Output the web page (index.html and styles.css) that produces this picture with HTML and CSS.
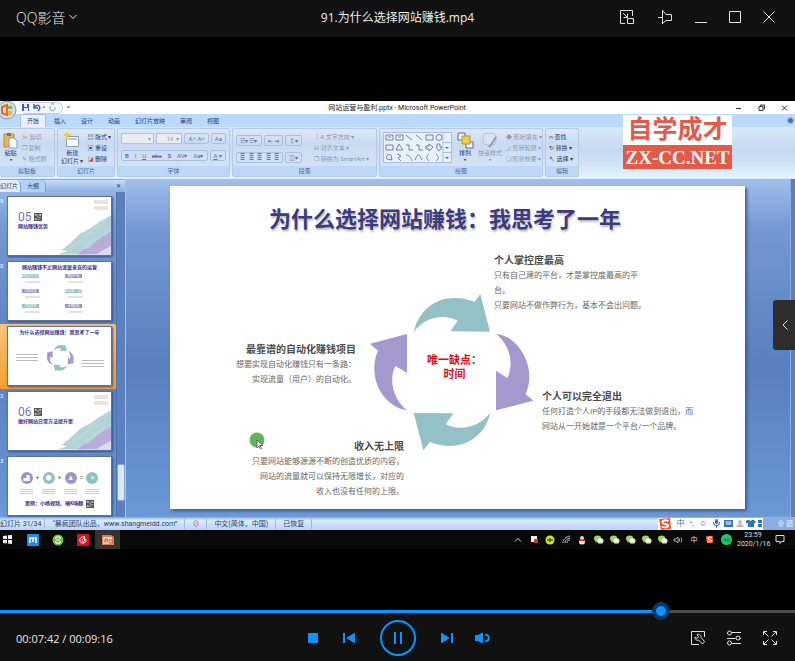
FILE: index.html
```html
<!DOCTYPE html>
<html lang="zh-CN">
<head>
<meta charset="utf-8">
<title>QQ影音</title>
<link rel="stylesheet" href="styles.css">
</head>
<body>
<svg class="sprite" aria-hidden="true">
  <symbol id="wechat" viewBox="0 0 12 12"><ellipse cx="5" cy="5" rx="4" ry="3.400" fill="#8fd94f"/><ellipse cx="8" cy="7.500" rx="3.500" ry="2.800" fill="#f1f5ee"/><path d="M3 7.500L2.500 9.500L5 8zM9 9.500l1.500 1L10 9z" fill="#8fd94f"/></symbol>
  <symbol id="sogou" viewBox="0 0 14 14"><path d="M1 2L12 1l1 11L3 13z" fill="#e9572b"/><path d="M10.500 4C8 2.500 4 3.500 4.500 5.500c.5 2 5.500 1 5.500 3.200 0 2-4 2.300-6 .8" fill="none" stroke="#fff" stroke-width="1.800"/></symbol>
  <symbol id="qr" viewBox="0 0 9 9"><path d="M0 0h9v9H0z" fill="#555"/><path d="M1 1h2v2H1zM6 1h2v2H6zM1 6h2v2H1zM4 2h1v3H4zM5 5h3v1H5zM4 7h2v1H4z" fill="#c9c9c9"/></symbol>
  <symbol id="brush" viewBox="0 0 62 54"><path d="M62 9L48 17 38 24 27 30 14 42 5 49 12 50 1 54H34L50 47 62 40z" fill="#b4d3d6"/><path d="M62 28L46 38 37 46 29 49 24 54H62V48z" fill="#b8add9"/><path d="M62 44L44 54H62z" fill="#dcd8ee"/><path d="M57 14L34 31M42 28L12 48M62 24L32 45" stroke="#d9e6ec" stroke-width="1" opacity=".5"/></symbol>
  <symbol id="cycle" viewBox="0 0 660 540">
    <path fill="#94c1c5" d="M222 155C235 90 290 50 350 54 375 56 390 60 403 66L421 42 450 155 331 154 353 122C310 100 255 110 222 155zM450 399C440 455 390 500 325 498 300 497 285 492 270 486L250 511 221 399 340 400 317 433C360 455 420 440 450 399z"/>
    <path fill="#a399cf" d="M468 162C520 165 568 225 568 290 568 310 563 328 557 342L580 362 468 391V272L502 294C525 245 505 190 468 162zM201 390C150 385 102 330 103 265 103 245 107 225 114 212L90 191 201 162V279L166 258C145 300 160 360 201 390z"/>
  </symbol>
</svg>

<div class="player">
  <header class="titlebar">
    <button class="brand" type="button">QQ影音
      <svg width="8" height="6" viewBox="0 0 8 6"><path d="M.5 1L4 4.500 7.500 1" fill="none" stroke="currentColor"/></svg>
    </button>
    <h1 class="filename">91.为什么选择网站赚钱.mp4</h1>
    <div class="window-tools">
      <div class="tools-a">
        <button type="button" aria-label="迷你模式"><svg width="16" height="16" viewBox="0 0 16 16"><path d="M6 14.500H1.500v-13h12V7M8.500 9.500h6v5h-6zM4 4l4 4M8.500 4.500v4h-4"/></svg></button>
        <button type="button" aria-label="置顶"><svg width="16" height="16" viewBox="0 0 16 16"><path d="M1 8.500h4M5.500 1v14M5.500 1.500L9 5.500h5.500v6H9L5.500 14.500"/></svg></button>
      </div>
      <div class="tools-b">
        <button type="button" aria-label="最小化"><svg width="14" height="14" viewBox="0 0 14 14"><path d="M1 12.500h12"/></svg></button>
        <button type="button" aria-label="最大化"><svg width="14" height="14" viewBox="0 0 14 14"><path d="M1.500 1.500h11v11h-11z"/></svg></button>
        <button type="button" aria-label="关闭"><svg width="14" height="14" viewBox="0 0 14 14"><path d="M1.500 1.500l11 11M12.500 1.500l-11 11"/></svg></button>
      </div>
    </div>
  </header>

  <main class="stage">
    <div class="video">
      <div class="ppt-title">
        <svg class="orb" width="18" height="20" viewBox="0 0 18 20"><circle cx="7" cy="9" r="9" fill="#d5dbe6" stroke="#8795ad"/><path d="M2 6l5-2v10l-5-2z" fill="none" stroke="#e56a2c" stroke-width="2"/><path d="M8 5h4v3H8z" fill="#7fb84a"/><path d="M8 10h4v4H8z" fill="#efb72f"/></svg>
        <svg class="quick" width="52" height="12" viewBox="0 0 52 12"><path d="M0 .5h39c6 1 6 10 0 11H4" fill="#f4f7fc" stroke="#c3cddd"/><path d="M3 2h7v7H3z" fill="#4a55b0"/><path d="M5 2h3v3H5zM5 6h4v3H5z" fill="#e6eaff"/><path d="M16 5c3-4 7 0 3 4M15 2v4h4" fill="none" stroke="#3a62bd" stroke-width="1.500"/><path d="M24 5h2M48 5h3" stroke="#445" stroke-width="1"/><path d="M31 4c-1 6 6 6 5 1M35 2h-3" fill="none" stroke="#9fb0c9" stroke-width="1.300"/></svg>
        <span class="doc-name">网站运营与盈利.pptx - Microsoft PowerPoint</span>
        <svg class="ppt-win" width="56" height="8" viewBox="0 0 56 8"><path d="M1 4.500h5M24 2.500h4v4h-4zM25.500 2v-1h4v4h-1M47 1.500l5 5M52 1.500l-5 5" fill="none" stroke="#333"/></svg>
      </div>
      <div class="ppt-tabs"><span class="active">开始</span><span>插入</span><span>设计</span><span>动画</span><span>幻灯片放映</span><span>审阅</span><span>视图</span><i class="help"></i></div>
      <div class="ribbon">
        <section class="group g-clip"><div class="tools">
          <div class="big"><svg width="15" height="17" viewBox="0 0 15 17"><path d="M1 2h10v13H1z" fill="#e8b455" stroke="#bd8a3a"/><path d="M4 1h4v3H4z" fill="#6b7485"/><path d="M6 6h5l3 3v7H6z" fill="#fff" stroke="#8a9bb8"/></svg><span>粘贴</span><b>▾</b></div>
          <div class="stack off"><span>✂ 剪切</span><span>❐ 复制</span><span>✎ 格式刷</span></div></div><h2>剪贴板</h2></section>
        <section class="group g-slides"><div class="tools">
          <div class="big"><svg width="16" height="17" viewBox="0 0 16 17"><path d="M2.500 4.500h12v10h-12z" fill="#fff" stroke="#8b9dbc"/><path d="M4 7h9" stroke="#b7c7e3" stroke-width="2"/><path d="M3 0v7M0 3h7" stroke="#f0cf3f" stroke-width="2"/></svg><span>新建<br>幻灯片 ▾</span></div>
          <div class="stack"><span>▤ 版式 ▾</span><span>▣ 重设</span><span><em>◪</em> 删除</span></div></div><h2>幻灯片</h2></section>
        <section class="group g-font"><div class="tools rows">
          <div class="row"><i class="field wide">▾</i><i class="field">14 &nbsp;▾</i><i class="pill">A˄ A˅</i><i class="pill">Aa</i></div>
          <div class="row"><i class="pill grow"><b>B</b><em>I</em><u>U</u><s>abc</s><b>S</b><span>AV▾</span><span>Aa▾</span></i><i class="pill"><u>A</u> ▾</i></div>
          </div><h2>字体</h2></section>
        <section class="group g-para"><div class="tools">
          <div class="rows">
            <div class="row"><i class="pill">☰▾ ☰▾</i><i class="pill">⇤ ⇥</i><i class="pill">↕▾</i></div>
            <div class="row"><i class="pill grow"><span>≣</span><span>≣</span><span>≣</span><span>≣</span><span>≣</span></i><i class="pill">▥▾</i></div>
          </div>
          <div class="stack off"><span>‖A 文字方向 ▾</span><span>⊟ 对齐文本 ▾</span><span>❐ 转换为 SmartArt ▾</span></div></div><h2>段落</h2></section>
        <section class="group g-draw"><div class="tools">
          <svg class="shapes" width="69" height="31" viewBox="0 0 69 31"><path d="M.5.5h68v30H.5z" fill="#e8f0fc" stroke="#a9bfdf"/><path d="M60 .5v30M60 10.500h8M60 20.500h8" stroke="#a9bfdf"/><g fill="none" stroke="#566b91" stroke-width=".8"><path d="M3 3h7v5H3zM13 3h7v5h-7zM5 5h3M15 5h3M23 3l6 5M33 3l6 5M43 3h7v5h-7zM3 13h7v5H3zM13 18l3-6 4 6zM23 13h3v5h4M33 13h3v5h4M43 14h3v-2l4 3-4 4v-2h-3zM54 12h3v3h2l-3 4-3-4h1zM4 27c-2-4 2-5 4-4l1 5zM14 22l4 2-3 2 3 3M23 23c3 0 5 2 6 6M32 28c3-7 4-7 7 0M46 22c-3 2-3 5 0 7M53 22c3 2 3 5 0 7"/><circle cx="56" cy="5.500" r="3"/></g><path d="M62 15h4l-2 2zM62 25h4l-2 2z" fill="#566b91"/></svg>
          <div class="big"><svg width="18" height="17" viewBox="0 0 18 17"><path d="M2 1h7v7H2zM10 10h7v6h-7z" fill="#f4f6fa" stroke="#5c6b85"/><path d="M6 4h8v8H6z" fill="#f1cd4d" stroke="#b8952e"/></svg><span>排列</span><b>▾</b></div>
          <div class="big off"><svg width="16" height="17" viewBox="0 0 16 17"><rect x="1" y="1" width="13" height="12" rx="4" fill="#d9e2f0" stroke="#b4c2d8"/><path d="M14 5l-5 8-2 2" stroke="#8f9db4" stroke-width="2"/></svg><span>快速样式</span><b>▾</b></div>
          <div class="stack off"><span>◆ 形状填充 ▾</span><span>◿ 形状轮廓 ▾</span><span>❏ 形状效果 ▾</span></div></div><h2>绘图</h2></section>
        <section class="group g-edit"><div class="tools"><div class="stack"><span>⩀ 查找</span><span>↻ 替换 ▾</span><span>↖ 选择 ▾</span></div></div><h2>编辑</h2></section>
      </div>

      <div class="work">
        <aside class="outline">
          <div class="outline-tabs"><span class="active">幻灯片</span><span>大纲</span><i>✕</i></div>
          <div class="outline-body">
            <ol class="thumbs">
              <li><span class="num">9</span><div class="thumb cover"><div class="logos"><i></i><i></i></div><div class="chapter">05<svg width="8" height="8"><use href="#qr"/></svg></div><strong>网站赚钱优势</strong><svg class="paint" width="54" height="48"><use href="#brush"/></svg></div></li>
              <li><span class="num">0</span><div class="thumb list"><strong>网站赚钱不止网站流量来自的运营</strong><div class="cells"><p class="teal">网站定位分析</p><p class="violet">网站产品</p><p class="violet">内容建设</p><p class="teal">网站推广运营</p><p class="teal">流量变现</p><p class="violet">长期收益</p></div></div></li>
              <li class="current"><span class="num">1</span><div class="thumb mini"><strong>为什么选择网站赚钱：我思考了一年</strong><div class="mini-art"><span class="ln a"></span><svg width="38" height="31"><use href="#cycle"/></svg><span class="ln b"></span></div></div></li>
              <li><span class="num">2</span><div class="thumb cover"><div class="logos"><i></i><i></i></div><div class="chapter">06<svg width="8" height="8"><use href="#qr"/></svg></div><strong>做好网站日常方法提升案</strong><svg class="paint" width="54" height="48"><use href="#brush"/></svg></div></li>
              <li><span class="num">3</span><div class="thumb formula"><div class="sum"><i class="violet">▟</i>+<i class="teal">●</i>+<i class="violet">♟</i>=<i class="teal">✕</i></div><div class="notes"><span></span><span></span><span></span><span></span></div><strong>案例：小杨视频、唱K嗨翻 <svg width="8" height="8" viewBox="0 0 9 9"><use href="#qr"/></svg></strong></div></li>
            </ol>
            <div class="scroll"><i></i></div>
          </div>
        </aside>
        <div class="canvas">
          <article class="slide">
            <h2 class="slide-title">为什么选择网站赚钱：我思考了一年</h2>
            <svg class="cycle" width="220" height="180"><use href="#cycle"/></svg>
            <p class="core">唯一缺点：<br>时间</p>
            <div class="note n1"><h3>个人掌控度最高</h3><p>只有自己建的平台，才是掌控度最高的平<br>台。<br>只要网站不做作弊行为，基本不会出问题。</p></div>
            <div class="note n2"><h3>最靠谱的自动化赚钱项目</h3><p>想要实现自动化赚钱只有一条路：<br>实现流量（用户）的自动化。</p></div>
            <div class="note n3"><h3>个人可以完全退出</h3><p>任何打造个人IP的手段都无法做到退出，而<br>网站从一开始就是一个平台/一个品牌。</p></div>
            <div class="note n4"><h3>收入无上限</h3><p>只要网站能够源源不断的创造优质的内容，<br>网站的流量就可以保持无限增长，对应的<br>收入也没有任何的上限。</p></div>
            <svg class="pointer" width="18" height="18" viewBox="0 0 18 18"><circle cx="8" cy="8" r="7.500" fill="#5fb45e"/><path d="M8 8v8l2-2 1.500 3 1-.5-1.500-3h3z" fill="#fff" stroke="#444" stroke-width=".7"/></svg>
          </article>
          <div class="scroll"></div>
        </div>
      </div>

      <div class="status">
        <span class="first">幻灯片 31/34</span><span>“暴疯团队出品，www.shangmeidd.com”</span><span><em>⊘</em></span><span>中文(简体，中国)</span><span>已恢复</span>
        <div class="ime"><svg width="14" height="14"><use href="#sogou"/></svg><span>中</span><span>°,</span><span>☺</span>
          <svg width="50" height="9" viewBox="0 0 50 9"><g fill="#2f74bb"><rect x="3" y="0" width="3" height="5" rx="1.500"/><path d="M1 3h1c0 4 5 4 5 0h1c0 3-2 4-3 4v2H4V7C3 7 1 6 1 3zM12 1h9v7h-9zM35 1h2l1.500 1L40 1h2l2 2-1.500 1.500L42 4v4h-6V4l-1 .5L33.500 3zM46 1h4v3h-4zM46 5h4v3h-4z"/></g><path d="M13.500 3h6M13.500 5h6" stroke="#fff"/><circle cx="28" cy="3" r="2" fill="#bbb"/><path d="M24 8c1-4 7-4 8 0z" fill="#bbb"/></svg>
        </div>
        <span class="zoom">⊕ ▨</span>
      </div>

      <div class="taskbar">
        <div class="apps">
          <span><svg width="9" height="9" viewBox="0 0 9 9"><path d="M0 1l4-.6V4H0zM5 .3L9 0v4H5zM0 5h4v3.600L0 8zM5 5h4v4l-4-.5z" fill="#f4f4f4"/></svg></span>
          <span><svg width="12" height="12" viewBox="0 0 12 12"><path d="M0 0h12v12H0z" fill="#1b8fe8"/><path d="M3 9V4h6v5M6 4v4" fill="none" stroke="#fff" stroke-width="1.500"/></svg></span>
          <span><svg width="12" height="12" viewBox="0 0 12 12"><circle cx="6" cy="6" r="5.500" fill="#72bd3d"/><path d="M3.500 5c0-3 5-3 5 0M3.500 7c0 3 5 3 5 0M4 6h4" fill="none" stroke="#f3f9e9" stroke-width="1.200"/></svg></span>
          <span><svg width="12" height="12" viewBox="0 0 12 12"><path d="M0 0h12v12H0z" fill="#d80f1e"/><path d="M8 3C4 2 2 5 3 7.500s6 2 6-1S5 4 5 6.500s3 1.500 2.500-.5L7 2" fill="none" stroke="#fff"/></svg></span>
          <span class="open"><svg width="13" height="12" viewBox="0 0 13 12"><path d="M1 1h9l3 2v8H1z" fill="#e8764c"/><path d="M2 3h9v7H2z" fill="#f6d5c3"/><path d="M4 9V5h2.500v2H4M8 6h3v3H8z" fill="none" stroke="#d0603c"/></svg></span>
        </div>
        <div class="tray">
          <span><svg width="8" height="6" viewBox="0 0 8 6"><path d="M1 4.500l3-3 3 3" fill="none" stroke="#ddd"/></svg></span>
          <span><svg width="9" height="9" viewBox="0 0 9 9"><path d="M1 1h6v6H1z" fill="#eee"/><path d="M4 4h4v4H4z" fill="#d4313d"/></svg></span>
          <span><svg width="10" height="10" viewBox="0 0 10 10"><circle cx="5" cy="5" r="4.500" fill="#d8e02f"/><path d="M2 5h6M5 3v4" stroke="#276b2c" stroke-width="1.500"/></svg></span>
          <span><svg width="9" height="9" viewBox="0 0 9 9"><path d="M1 8c0-4 3-6 7-7M3 8c0-3 2-4 5-5M5 8c0-2 1-3 3-3" fill="none" stroke="#bbb"/></svg></span>
          <span><svg width="8" height="10" viewBox="0 0 8 10"><circle cx="4" cy="3" r="2" fill="#d9d9d9"/><ellipse cx="4" cy="7" rx="3" ry="2.500" fill="#eee"/><path d="M1 4.500h6v1.500H1z" fill="#e02d22"/></svg></span>
          <span><svg width="11" height="11"><use href="#wechat"/></svg></span><span><svg width="11" height="11"><use href="#wechat"/></svg></span><span><svg width="11" height="11"><use href="#wechat"/></svg></span><span><svg width="11" height="11"><use href="#wechat"/></svg></span><span><svg width="11" height="11"><use href="#wechat"/></svg></span>
          <span><svg width="10" height="8" viewBox="0 0 10 8"><path d="M1 3h2l2-2v6L3 5H1zM6.500 2.500v3M8 1.500c1 2 1 3 0 5" fill="none" stroke="#ccc" stroke-width=".8"/></svg></span>
          <span>中</span><span class="slim"><svg width="9" height="9" viewBox="0 0 14 14"><use href="#sogou"/></svg></span>
          <b class="badge">46</b>
          <time>23:59<br>2020/1/16</time>
          <svg width="10" height="9" viewBox="0 0 10 9"><path d="M1 .5h8v6H6.500L5 8.500V6.500H1z" fill="none" stroke="#ddd"/></svg>
        </div>
      </div>

      <div class="watermark"><b>自学成才</b><span>ZX-CC.NET</span></div>
    </div>
    <button class="drawer" type="button" aria-label="展开播放列表"><svg width="8" height="12" viewBox="0 0 8 12"><path d="M6.500 1.500L2 6l4.500 4.500" fill="none" stroke="#e4e4e4"/></svg></button>
  </main>

  <footer class="controls">
    <input class="seek" type="range" min="0" max="1000" value="839" aria-label="播放进度">
    <div class="bar">
      <div class="clock">00:07:42 / 00:09:16</div>
      <div class="transport">
        <button type="button" aria-label="停止"><svg width="12" height="12" viewBox="0 0 12 12"><rect x="1" y="1" width="10" height="10" rx="1"/></svg></button>
        <button type="button" aria-label="上一个"><svg width="12" height="12" viewBox="0 0 12 12"><path d="M0 1h2v10H0zM12 1.500v9q0 .8-.8.400L4 6.500q-.5-.5 0-1L11.200 1.100q.8-.4.8.4z"/></svg></button>
        <button class="pause" type="button" aria-label="暂停"><svg width="8" height="12" viewBox="0 0 8 12"><path d="M0 0h2v12H0zM6 0h2v12H6z"/></svg></button>
        <button type="button" aria-label="下一个"><svg width="12" height="12" viewBox="0 0 12 12"><path d="M10 1h2v10h-2zM0 1.500v9q0 .8.8.400L8 6.500q.5-.5 0-1L.8 1.100Q0 .7 0 1.500z"/></svg></button>
        <button type="button" aria-label="音量"><svg width="15" height="12" viewBox="0 0 15 12"><path d="M0 3.500Q0 3 .5 3H3L7 .8q1-.4 1 .6v9.200q0 1-1 .6L3 9H.5Q0 9 0 8.500z"/><path d="M10 2.500c5 .5 5 6.500 0 7" fill="none" stroke="#0a94ff" stroke-width="2"/></svg></button>
      </div>
      <div class="extras">
        <button type="button" aria-label="工具"><svg width="16" height="16" viewBox="0 0 16 16"><path d="M9 14.500H1.500v-13h13V7"/><path d="M7 4.500c2-1 4.500.8 4 3l3.500 4-2 2.500-4-4c-2 1-4-1-3.500-3l2 1.500 1.500-1.500z"/></svg></button>
        <button type="button" aria-label="设置"><svg width="16" height="16" viewBox="0 0 16 16"><circle cx="3.500" cy="3" r="2"/><circle cx="12" cy="8" r="2"/><circle cx="3.500" cy="13" r="2"/><path d="M6 2.500h9M1 8.500h8.500M14 8.500h1M6 13.500h9"/></svg></button>
        <button type="button" aria-label="全屏"><svg width="16" height="16" viewBox="0 0 16 16"><path d="M5 1.500H1.500V5M11 1.500h3.500V5M5 14.500H1.500V11M11 14.500h3.500V11M2 2l4.500 4.500M14 2L9.500 6.500M2 14l4.500-4.500M14 14L9.500 9.500"/></svg></button>
      </div>
    </div>
  </footer>
</div>
</body>
</html>
```
FILE: styles.css
```css
* { box-sizing: border-box; margin: 0; padding: 0; }
body { background: #000; color: #e4e4e4; font-family: "Open Sans", "Noto Sans CJK SC", sans-serif; font-size: 12px; }
button { background: none; border: 0; color: inherit; font: inherit; display: flex; align-items: center; justify-content: center; }
i, em { font-style: normal; }
ol { list-style: none; }
svg { flex: none; display: block; }
.sprite { position: absolute; width: 0; height: 0; }

.player { min-height: 100vh; display: flex; flex-direction: column; overflow: hidden; }
.titlebar { display: grid; grid-template-columns: 1fr auto 1fr; align-items: center; height: 37px; padding: 0 14px 3px 14px; background: #111; }
.brand { justify-self: start; gap: 4px; padding-left: 2px; font-size: 14px; font-weight: 300; color: #eee; }
.filename { font-size: 12px; font-weight: 400; color: #eee; }
.window-tools { justify-self: end; display: flex; gap: 12px; }
.tools-a { display: flex; gap: 14px; }
.tools-b { display: flex; gap: 10px; }
.window-tools button, .extras button { width: 24px; height: 24px; }
.window-tools svg, .extras svg { fill: none; stroke: #e2e2e2; }

.stage { flex: 1; position: relative; display: flex; align-items: center; padding-top: 3px; background: #000; }
.drawer { position: absolute; right: 0; top: 263px; width: 22px; height: 50px; background: #2d2d2d; border-radius: 3px 0 0 3px; padding-left: 2px; }
.video { position: relative; flex: 1; min-width: 0; overflow: hidden; color: #28406f; font-family: Roboto, "Noto Sans CJK SC", sans-serif; font-size: 7px; line-height: 10px; }

.ppt-title { position: relative; display: flex; align-items: center; height: 13px; background: #fff; }
.orb { position: absolute; left: 0; top: 0; z-index: 2; }
.quick { margin-left: 19px; }
.doc-name { flex: 1; padding-right: 12px; text-align: center; color: #222; }
.ppt-win { margin-right: 4px; }
.ppt-tabs { display: flex; align-items: flex-end; gap: 15px; height: 13px; padding-left: 20px; background: #bcd9ff; font-size: 6px; line-height: 12px; color: #1d3f7c; }
.ppt-tabs .active { padding: 0 6px; margin-right: -7px; background: #e9f1fc; border: 1px solid #a5c0e6; border-bottom: 0; border-radius: 2px 2px 0 0; }
.ppt-tabs .help { width: 7px; height: 7px; margin: 0 1px 3px auto; border-radius: 50%; background: #3e71c4; border: 1px solid #9fc0ee; }

.ribbon { display: flex; gap: 2px; height: 52px; padding: 1px 0; background: linear-gradient(#dce8f8, #c7d9f1 45%, #d4e4f8 75%, #e6f4ff); border-bottom: 1px solid #d8ecff; }
.group { display: flex; flex-direction: column; border: 1px solid #b3cae9; border-radius: 2px; overflow: hidden; white-space: nowrap; background: linear-gradient(#dfe9f7, #c9daf1 30%, #d8e6f8); font-size: 6px; }
.group h2 { height: 10px; font-size: 6px; line-height: 9px; font-weight: 400; text-align: center; background: #bfd7f6; color: #3f66a3; }
.tools { flex: 1; display: flex; gap: 4px; padding: 2px 3px 0; }
.g-clip { width: 55px; border-left: 0; }
.g-slides { width: 58px; }
.g-font { width: 113px; }
.g-para { width: 145px; }
.g-para .stack { margin-left: auto; padding-right: 4px; }
.g-draw { width: 164px; }
.g-edit { width: 34px; }
.big { display: flex; flex-direction: column; align-items: center; text-align: center; line-height: 8px; padding-top: 1px; }
.big b { font-size: 4px; line-height: 6px; }
.stack { display: flex; flex-direction: column; font-size: 6px; line-height: 11px; }
.stack em { color: #cf4a3e; }
.off { color: #8997b1; }
.rows { display: flex; flex-direction: column; gap: 6px; padding-top: 4px; }
.row { display: flex; gap: 2px; height: 11px; line-height: 9px; color: #5f7399; }
.field { width: 26px; border: 1px solid #b6c3d6; background: #e9edf3; text-align: right; padding-right: 2px; color: #929dad; }
.wide { flex: 1; }
.pill { border: 1px solid #a9bfe0; border-radius: 2px; padding: 0 3px; }
.grow { flex: 1; display: flex; justify-content: space-between; }
.shapes { margin-top: 1px; }

.work { display: flex; background: linear-gradient(#a3c0eb, #7698d4 14%, #587fc0 55%, #6b98d6); }
.outline { width: 126px; flex: none; border-right: 1px solid #a8c4ea; }
.outline-tabs { display: flex; height: 13px; font-size: 6px; line-height: 12px; background: linear-gradient(#c8dcf7, #8eb0e4); border-top: 1px solid #8daad6; }
.outline-tabs span { padding: 0 6px; border-radius: 0 5px 0 0; border-right: 1px solid #7f9fd0; background: #b6cff3; }
.outline-tabs .active { padding: 0 2px 0 0; background: #e2edfb; }
.outline-tabs i { margin: 0 4px 0 auto; }
.outline-body { display: flex; height: 325px; }
.thumbs { flex: 1; padding-top: 2px; }
.thumbs li { display: flex; height: 65px; padding-top: 2px; }
.thumbs .current { background: linear-gradient(#f8c37c, #f59e2e); border-radius: 0 2px 2px 0; }
.num { width: 7px; color: #fff; font-size: 6px; }
.thumb { position: relative; width: 105px; height: 60px; background: #fff; border: 1px solid #5f7396; box-shadow: 1px 1px 2px #34528c; overflow: hidden; color: #3a3083; font-size: 4px; line-height: 6px; }
.thumb strong { display: block; font-size: 5px; }
.outline .scroll { width: 9px; padding-top: 272px; background: #5c80bd; border-left: 1px solid #4b6faf; }
.outline .scroll i { display: block; height: 37px; background: #dce8f8; border: 1px solid #8aa6cf; border-radius: 2px; }
.cover { padding: 3px 3px 0 10px; }
.logos { display: flex; flex-direction: column; align-items: flex-end; gap: 2px; }
.logos i { width: 14px; height: 4px; background: #eee3da; }
.chapter { display: flex; align-items: center; gap: 2px; font-size: 12px; line-height: 12px; color: #7a73aa; margin-top: 1px; }
.paint { position: absolute; right: 0; bottom: 0; }
.list strong, .mini strong { text-align: center; margin-top: 2px; }
.cells { display: grid; grid-template-columns: 17px 17px; column-gap: 26px; row-gap: 11px; margin: 4px 0 0 14px; }
.cells p { height: 4px; font-size: 3px; line-height: 4px; text-align: center; color: #fff; white-space: nowrap; box-shadow: 2px 6px 0 -1px #e2e2e6; }
.teal { background: #8fc0c3; }
.violet { background: #9d93cb; }
.mini-art { display: flex; align-items: center; justify-content: center; gap: 3px; padding-top: 7px; }
.ln { width: 22px; height: 8px; background: repeating-linear-gradient(#bbb 0 1px, #fff 1px 3px); }
.ln.b { margin-top: 12px; }
.formula { padding-top: 15px; text-align: center; }
.formula strong { display: flex; justify-content: center; gap: 3px; margin-top: 6px; }
.sum { display: flex; justify-content: center; align-items: center; gap: 3px; font-size: 7px; color: #555; }
.sum i { width: 12px; height: 12px; border-radius: 50%; color: #fff; font-size: 6px; line-height: 12px; }
.notes { display: flex; justify-content: center; gap: 9px; margin-top: 5px; }
.notes span { width: 13px; height: 5px; background: repeating-linear-gradient(#ccc 0 1px, #fff 1px 2px); }

.canvas { flex: 1; display: flex; justify-content: space-between; min-width: 0; }
.canvas > .scroll { width: 5px; background: #5b80bd; border-left: 1px solid #8faedd; }
.slide { position: relative; width: 575px; height: 323px; margin: 7px 0 8px 44px; background: #fff; box-shadow: 2px 2px 3px #3c5a92; color: #666; }
.slide-title { position: absolute; left: 99px; top: 18px; font-size: 22px; line-height: 32px; color: #3d3a80; white-space: nowrap; text-shadow: 1px 2px 2px #bbb; }
.cycle { position: absolute; left: 170px; top: 94px; }
.core { position: absolute; left: 257px; top: 168px; font-size: 11px; line-height: 14px; font-weight: 700; text-align: center; color: #d4121c; }
.note { position: absolute; font-size: 8px; line-height: 15px; white-space: nowrap; }
.note h3 { font-size: 10px; line-height: 15px; color: #4c4c4c; }
.n1 { left: 324px; top: 67px; }
.n2 { right: 389px; top: 156px; text-align: right; }
.n3 { left: 372px; top: 203px; }
.n4 { right: 341px; top: 253px; text-align: right; }
.pointer { position: absolute; left: 79px; top: 246px; }

.status { position: relative; display: flex; align-items: center; height: 13px; background: linear-gradient(#7fa9e3, #dcebfd 25%, #b9d3f5); white-space: nowrap; }
.status > span { padding: 0 7px; border-right: 1px solid #9fbbe2; }
.status .first { padding-left: 0; padding-right: 3px; }
.status em { color: #d0483c; }
.status .ime { display: flex; align-items: center; gap: 5px; height: 12px; margin-left: auto; padding-right: 1px; background: #fff; color: #2f74bb; font-size: 8px; }
.status .zoom { border: 0; padding: 0 2px 0 14px; background: #8aace0; color: #eef5ff; line-height: 12px; }

.taskbar { display: flex; justify-content: space-between; height: 19px; background: #090909; color: #ddd; }
.apps { display: flex; }
.apps span { display: flex; align-items: center; justify-content: center; width: 25px; }
.apps span:first-child { width: 20px; padding-right: 5px; }
.apps .open { background: #333; }
.tray { display: flex; align-items: center; padding-right: 10px; }
.tray span { display: flex; justify-content: center; width: 16px; }
.tray .slim { width: 14px; }
.badge { width: 11px; height: 11px; margin: 0 5px; border-radius: 50%; background: #1fc776; color: #083; font-size: 6px; line-height: 11px; text-align: center; }
.tray time { width: 32px; margin-right: 6px; font-size: 7px; line-height: 9px; text-align: center; }

.watermark { position: absolute; left: 623px; top: 14px; display: flex; flex-direction: column; width: 109px; text-align: center; background: #fff; color: #e25a4a; }
.watermark b { font-size: 25px; line-height: 30px; height: 30px; white-space: nowrap; }
.watermark span { height: 24px; background: #e25a4a; color: #fff; font-family: "Liberation Serif", serif; font-size: 19px; line-height: 25px; font-weight: 700; }

.controls { background: #111; }
.seek { -webkit-appearance: none; appearance: none; display: block; width: 100%; height: 18px; margin: -8px 0 -7px; background: none; position: relative; }
.seek::-webkit-slider-runnable-track { height: 3px; background: linear-gradient(90deg, #0a94ff 83%, #4d4d4d 83%); }
.seek::-webkit-slider-thumb { -webkit-appearance: none; width: 18px; height: 18px; margin-top: -8px; border: 4px solid #073a63; border-radius: 50%; background: #0a94ff; }
.bar { display: grid; grid-template-columns: 1fr auto 1fr; align-items: center; height: 48px; padding: 2px 13px 0; }
.clock { padding-left: 3px; font-size: 11px; color: #e8e8e8; }
.transport { display: flex; align-items: center; gap: 12px; }
.transport svg { fill: #0a94ff; }
.transport button { width: 24px; height: 24px; }
.transport .pause { width: 36px; height: 36px; margin: 0 7px; border: 2px solid #0a94ff; border-radius: 50%; }
.extras { justify-self: end; display: flex; gap: 12px; }
```
